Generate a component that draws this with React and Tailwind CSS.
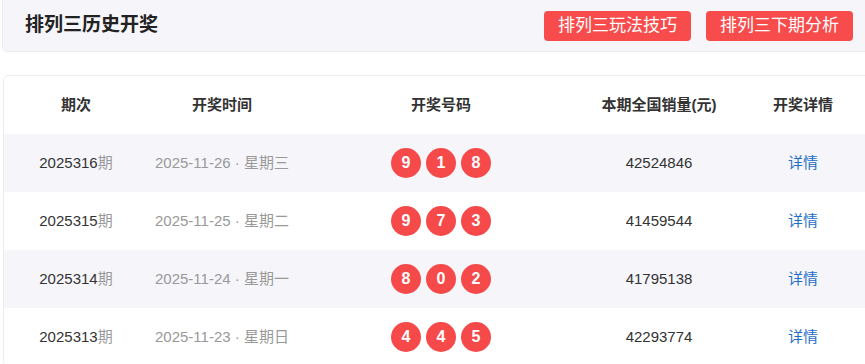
import React from "react";

const rows = [
  { no: "2025316", date: "2025-11-26", week: "星期三", balls: [9, 1, 8], sales: "42524846" },
  { no: "2025315", date: "2025-11-25", week: "星期二", balls: [9, 7, 3], sales: "41459544" },
  { no: "2025314", date: "2025-11-24", week: "星期一", balls: [8, 0, 2], sales: "41795138" },
  { no: "2025313", date: "2025-11-23", week: "星期日", balls: [4, 4, 5], sales: "42293774" },
];

const cols = "grid grid-cols-[144px_148px_290px_146px_142px]";

export default function App() {
  return (
    <div
      className="w-[865px] h-[364px] overflow-hidden bg-white"
      style={{ fontFamily: '"Liberation Sans", "Noto Sans CJK SC", sans-serif' }}
    >
      <div className="w-[876px] pl-[2px]">
        <div className="h-[52px] flex items-center justify-between pl-[22px] pr-[22px] bg-[#f5f5fa] border border-t-0 border-[#ececf0] rounded-b-md">
          <div className="text-[19px] font-bold text-[#222]">排列三历史开奖</div>
          <div className="flex gap-[15px]">
            <div className="h-[30px] px-[14px] flex items-center rounded-[4px] bg-[#f84b4b] text-white text-[17px]">排列三玩法技巧</div>
            <div className="h-[30px] px-[14px] flex items-center rounded-[4px] bg-[#f84b4b] text-white text-[17px]">排列三下期分析</div>
          </div>
        </div>
        <div className="mt-[23px] ml-px border border-[#ececf0] rounded-md overflow-hidden bg-white">
          <div className={`${cols} h-[58px] items-center text-center text-[15px] font-bold text-[#333]`}>
            <div>期次</div>
            <div>开奖时间</div>
            <div>开奖号码</div>
            <div>本期全国销量(元)</div>
            <div>开奖详情</div>
          </div>
          {rows.map((r, i) => (
            <div
              key={r.no}
              className={`${cols} h-[58px] items-center text-center text-[15px] ${i % 2 === 0 ? "bg-[#f5f5fa]" : "bg-white"}`}
            >
              <div className="text-[#333]">
                {r.no}
                <span className="text-[#999]">期</span>
              </div>
              <div className="text-[#999]">
                {r.date} · {r.week}
              </div>
              <div className="flex justify-center gap-[5px]">
                {r.balls.map((b, j) => (
                  <div
                    key={j}
                    className="w-[30px] h-[30px] rounded-full bg-[#f64a4a] text-white font-bold text-[16px] flex items-center justify-center"
                  >
                    {b}
                  </div>
                ))}
              </div>
              <div className="text-[#333]">{r.sales}</div>
              <div className="text-[#1f6fc8]">详情</div>
            </div>
          ))}
        </div>
      </div>
    </div>
  );
}
